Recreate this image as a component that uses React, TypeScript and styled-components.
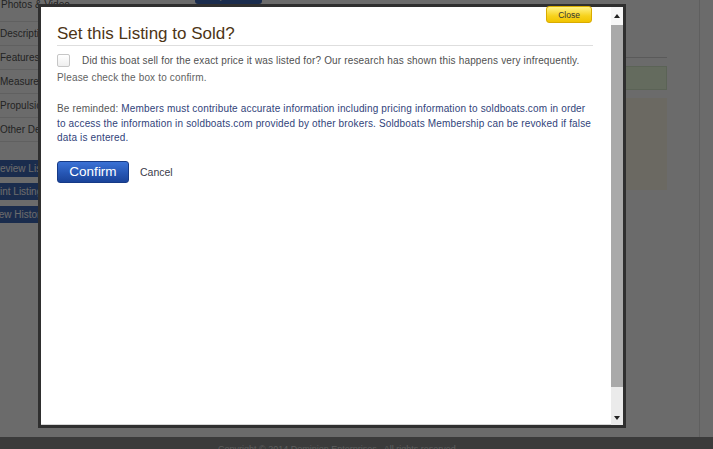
import React from "react";
import styled, { createGlobalStyle } from "styled-components";

const Global = createGlobalStyle`
  html, body { margin: 0; padding: 0; }
  body {
    background: #ffffff;
    font-family: "Liberation Sans", Arial, sans-serif;
    overflow: hidden;
  }
  * { box-sizing: border-box; }
`;

const Page = styled.div`
  width: 713px;
  height: 449px;
  overflow: hidden;
  display: flex;
  flex-direction: column;
  background: #ffffff;
`;

const Container = styled.div`
  width: 700px;
  height: 437px;
  flex: none;
  display: flex;
  border-right: 1px solid #e2e2e2;
`;

const Sidebar = styled.aside`
  width: 180px;
  flex: none;
  display: flex;
  flex-direction: column;
`;

const Menu = styled.ul`
  list-style: none;
  margin: -2px 0 0;
  padding: 0;
`;

const MenuItem = styled.li<{ $first?: boolean }>`
  height: 24px;
  border-bottom: 1px solid #e4e4e4;
  display: flex;
  align-items: ${(p) => (p.$first ? "flex-start" : "center")};
  padding-left: ${(p) => (p.$first ? 1 : 0)}px;
  font-size: 10px;
  line-height: 14px;
  color: #555555;
  white-space: nowrap;
`;

const SideButtons = styled.div`
  margin-top: 18px;
  display: flex;
  flex-direction: column;
  gap: 6px;
`;

const SideButton = styled.div`
  height: 17px;
  width: 112px;
  margin-left: -14px;
  padding-left: 4px;
  display: flex;
  align-items: center;
  background: #3f69b8;
  border-radius: 3px;
  color: #ffffff;
  font-size: 10px;
  white-space: nowrap;
`;

const Main = styled.main`
  flex: 1;
  display: flex;
  flex-direction: column;
  padding: 0 32px 0 15px;
`;

const UpdateButton = styled.div`
  margin-top: -14px;
  width: 67px;
  height: 18px;
  background: #3f69b8;
  border-radius: 3px;
  color: #ffffff;
  font-size: 10px;
  display: flex;
  align-items: center;
  justify-content: center;
`;

const Rule = styled.div`
  margin-top: 53px;
  height: 1px;
  background: #d6d6d6;
`;

const SuccessBox = styled.div`
  margin-top: 8px;
  height: 24px;
  background: #eeffe0;
  border: 1px solid #d9eccd;
`;

const NoticeBox = styled.div`
  margin-top: 8px;
  height: 92px;
  background: #fffbe9;
`;

const Footer = styled.footer`
  flex: 1;
  background: #8c8c8c;
  color: #dcdcdc;
  font-size: 9px;
  padding: 7px 0 0 218px;
  white-space: pre;
`;

const Overlay = styled.div`
  position: fixed;
  inset: 0;
  background: rgba(0, 0, 0, 0.58);
`;

const Dialog = styled.div`
  position: fixed;
  left: 38px;
  top: 4px;
  width: 588px;
  height: 424px;
  border: 3px solid #2f2f2f;
  background: #ffffff;
  display: flex;
  box-shadow: inset 0 -1px 0 #d6d6d6;
`;

const DialogBody = styled.div`
  flex: 1;
  position: relative;
  padding: 17px 18px 0 16px;
  font-size: 10px;
  letter-spacing: 0.16px;
`;

const CloseButton = styled.button`
  position: absolute;
  top: -1px;
  right: 19px;
  width: 46px;
  height: 17px;
  padding: 0;
  border: 1px solid #d9ab00;
  border-radius: 3px;
  background: linear-gradient(#fff387, #f7d21c 60%, #f1c400);
  font-family: "Liberation Sans", Arial, sans-serif;
  font-size: 8.5px;
  letter-spacing: 0;
  color: #333333;
  cursor: pointer;
`;

const Title = styled.h2`
  margin: 0;
  font-size: 17px;
  line-height: 20px;
  font-weight: normal;
  letter-spacing: 0;
  color: #4d3516;
  padding-bottom: 1px;
  border-bottom: 1px solid #dedede;
`;

const CheckRow = styled.label`
  margin-top: 8px;
  display: flex;
  align-items: flex-start;
  gap: 12px;
  line-height: 14px;
  color: #505050;
`;

const CheckBox = styled.span`
  width: 13px;
  height: 13px;
  flex: none;
  border: 1px solid #c6c6c6;
  border-radius: 2px;
  background: linear-gradient(#ffffff, #eeeeee);
`;

const ConfirmNote = styled.p`
  margin: 3px 0 0;
  line-height: 14px;
  color: #626262;
`;

const Reminder = styled.p`
  margin: 17px 0 0;
  line-height: 14.5px;
  color: #31437a;
`;

const Lead = styled.span`
  color: #575757;
`;

const Actions = styled.div`
  margin-top: 15px;
  display: flex;
  align-items: center;
  letter-spacing: 0;
`;

const ConfirmButton = styled.button`
  width: 72px;
  height: 22px;
  padding: 0;
  border: 1px solid #163a86;
  border-radius: 3px;
  background: linear-gradient(#3b72d6, #2656b4 55%, #1a4399);
  color: #ffffff;
  font-family: "Liberation Sans", Arial, sans-serif;
  font-size: 13.5px;
  cursor: pointer;
`;

const CancelLink = styled.a`
  margin-left: 11px;
  font-size: 10.5px;
  color: #3a3b4a;
  text-decoration: none;
  cursor: pointer;
`;

const ScrollBar = styled.div`
  width: 12px;
  flex: none;
  display: flex;
  flex-direction: column;
  background: #ebebeb;
`;

const ScrollArrow = styled.div<{ $h: number; $bg: string }>`
  height: ${(p) => p.$h}px;
  flex: none;
  display: flex;
  align-items: center;
  justify-content: center;
  background: ${(p) => p.$bg};
`;

const ScrollThumb = styled.div`
  height: 362px;
  flex: none;
  background: #a9a9a9;
`;

const ScrollTrack = styled.div`
  flex: 1;
`;

export default function App() {
  const menu = [
    "Photos & Video",
    "Description",
    "Features",
    "Measurements",
    "Propulsion",
    "Other Details",
  ];
  return (
    <>
      <Global />
      <Page>
        <Container>
          <Sidebar>
            <Menu>
              {menu.map((m, i) => (
                <MenuItem key={m} $first={i === 0}>
                  {m}
                </MenuItem>
              ))}
            </Menu>
            <SideButtons>
              <SideButton>Preview Listing</SideButton>
              <SideButton>Print Listing</SideButton>
              <SideButton>View History</SideButton>
            </SideButtons>
          </Sidebar>
          <Main>
            <UpdateButton>Update</UpdateButton>
            <Rule />
            <SuccessBox />
            <NoticeBox />
          </Main>
        </Container>
        <Footer>Copyright © 2014 Dominion Enterprises   All rights reserved</Footer>
      </Page>
      <Overlay />
      <Dialog>
        <DialogBody>
          <CloseButton>Close</CloseButton>
          <Title>Set this Listing to Sold?</Title>
          <CheckRow>
            <CheckBox />
            <span>
              Did this boat sell for the exact price it was listed for? Our
              research has shown this happens very infrequently.
            </span>
          </CheckRow>
          <ConfirmNote>Please check the box to confirm.</ConfirmNote>
          <Reminder>
            <Lead>Be reminded: </Lead>Members must contribute accurate
            information including pricing information to soldboats.com in
            order to access the information in soldboats.com provided by other
            brokers. Soldboats Membership can be revoked if false data is
            entered.
          </Reminder>
          <Actions>
            <ConfirmButton>Confirm</ConfirmButton>
            <CancelLink>Cancel</CancelLink>
          </Actions>
        </DialogBody>
        <ScrollBar>
          <ScrollArrow $h={18} $bg="#f7f7f7">
            <svg width="6" height="4" viewBox="0 0 6 4">
              <path d="M0 4 L3 0 L6 4 Z" fill="#222" />
            </svg>
          </ScrollArrow>
          <ScrollThumb />
          <ScrollTrack />
          <ScrollArrow $h={14} $bg="#ebebeb">
            <svg width="6" height="4" viewBox="0 0 6 4">
              <path d="M0 0 L6 0 L3 4 Z" fill="#222" />
            </svg>
          </ScrollArrow>
        </ScrollBar>
      </Dialog>
    </>
  );
}
